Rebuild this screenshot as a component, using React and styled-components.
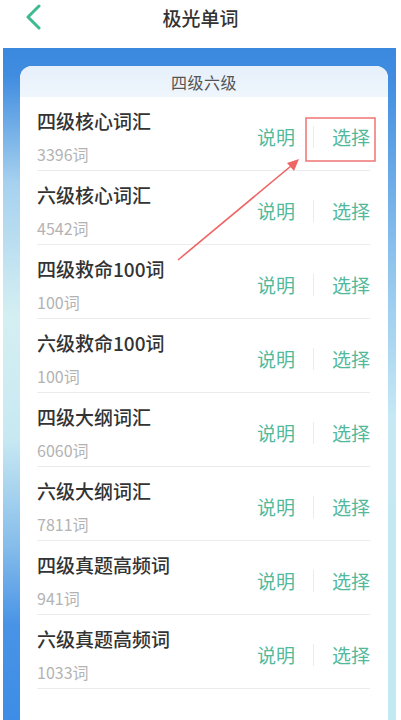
import styled, { createGlobalStyle } from "styled-components";

const GlobalStyle = createGlobalStyle`
  html, body {
    margin: 0;
    padding: 0;
    background: #fff;
  }
  body {
    font-family: "Noto Sans CJK SC", "Noto Sans", sans-serif;
  }
`;

const Page = styled.div`
  position: relative;
  width: 401px;
  height: 720px;
  overflow: hidden;
  background: #fff;
`;

const TopBar = styled.div`
  height: 48px;
  display: flex;
  align-items: flex-start;
  justify-content: center;
  position: relative;
`;

const BackButton = styled.div`
  position: absolute;
  left: 20px;
  top: 3px;
  width: 26px;
  height: 28px;
  display: flex;
  align-items: center;
  justify-content: center;
`;

const Title = styled.h1`
  margin: 4px 0 0 0;
  font-size: 19px;
  line-height: 28px;
  font-weight: 500;
  color: #333;
`;

const Panel = styled.div`
  margin: 0 5px 0 3px;
  padding: 18px 8px 0 17px;
  height: 672px;
  box-sizing: border-box;
  background-color: #3b89df;
  background-image:
    linear-gradient(
      to bottom,
      #3b89df 0%,
      #3f8ce0 4%,
      #a6d1ef 20%,
      #d4eff2 40%,
      #c8e9f2 58%,
      #86bdeb 74%,
      #4893e6 86%,
      #3d8de6 100%
    ),
    linear-gradient(
      to bottom,
      #3b89df 0%,
      #3f8ce0 4%,
      #8fc4ee 32%,
      #c6e8f4 55%,
      #c2e8f1 100%
    );
  background-size: 52% 100%, 52% 100%;
  background-position: left top, right top;
  background-repeat: no-repeat;
`;

const Card = styled.div`
  background: #fff;
  border-radius: 12px 12px 0 0;
  overflow: hidden;
  padding-bottom: 40px;
`;

const CardHead = styled.div`
  height: 31px;
  display: flex;
  align-items: center;
  justify-content: center;
  background: linear-gradient(to bottom, #e6f0fb, #eff6fc);
  font-size: 16px;
  color: #555;
  letter-spacing: 0.5px;
`;

const Row = styled.div`
  margin: 0 18px 0 17px;
  height: 73px;
  border-bottom: 1px solid #ececec;
  display: flex;
  align-items: center;
`;

const Info = styled.div`
  flex: 1;
  align-self: flex-start;
  padding-top: 11px;
`;

const Name = styled.div`
  font-size: 19px;
  line-height: 26px;
  font-weight: 500;
  color: #333;
`;

const Count = styled.div`
  margin-top: 10px;
  font-size: 16px;
  line-height: 20px;
  color: #b3b3b3;
`;

const Actions = styled.div`
  display: flex;
  align-items: center;
  margin-top: 6px;
`;

const Action = styled.span`
  font-size: 19px;
  line-height: 26px;
  color: #52b99b;
`;

const Sep = styled.span`
  width: 1px;
  height: 22px;
  margin: 0 18px;
  background: #ececec;
`;

const Overlay = styled.svg`
  position: absolute;
  left: 0;
  top: 0;
  pointer-events: none;
`;

const lists = [
  { name: "四级核心词汇", count: 3396 },
  { name: "六级核心词汇", count: 4542 },
  { name: "四级救命100词", count: 100 },
  { name: "六级救命100词", count: 100 },
  { name: "四级大纲词汇", count: 6060 },
  { name: "六级大纲词汇", count: 7811 },
  { name: "四级真题高频词", count: 941 },
  { name: "六级真题高频词", count: 1033 },
];

export default function App() {
  return (
    <Page>
      <GlobalStyle />
      <TopBar>
        <BackButton>
          <svg width="18" height="26" viewBox="0 0 18 26">
            <path
              d="M15 2 L4 13 L15 24"
              fill="none"
              stroke="#3dba8e"
              strokeWidth="3"
              strokeLinecap="round"
              strokeLinejoin="round"
            />
          </svg>
        </BackButton>
        <Title>极光单词</Title>
      </TopBar>
      <Panel>
        <Card>
          <CardHead>四级六级</CardHead>
          {lists.map((item) => (
            <Row key={item.name}>
              <Info>
                <Name>{item.name}</Name>
                <Count>{item.count}词</Count>
              </Info>
              <Actions>
                <Action>说明</Action>
                <Sep />
                <Action>选择</Action>
              </Actions>
            </Row>
          ))}
        </Card>
      </Panel>
      <Overlay width="401" height="720" viewBox="0 0 401 720">
        <rect
          x="306"
          y="118"
          width="69"
          height="43"
          fill="none"
          stroke="#f07c7c"
          strokeWidth="1.6"
        />
        <line
          x1="178"
          y1="260"
          x2="291"
          y2="166"
          stroke="#f06464"
          strokeWidth="1.6"
        />
        <polygon points="299,159 287,163 294,171" fill="#f06464" />
      </Overlay>
    </Page>
  );
}
